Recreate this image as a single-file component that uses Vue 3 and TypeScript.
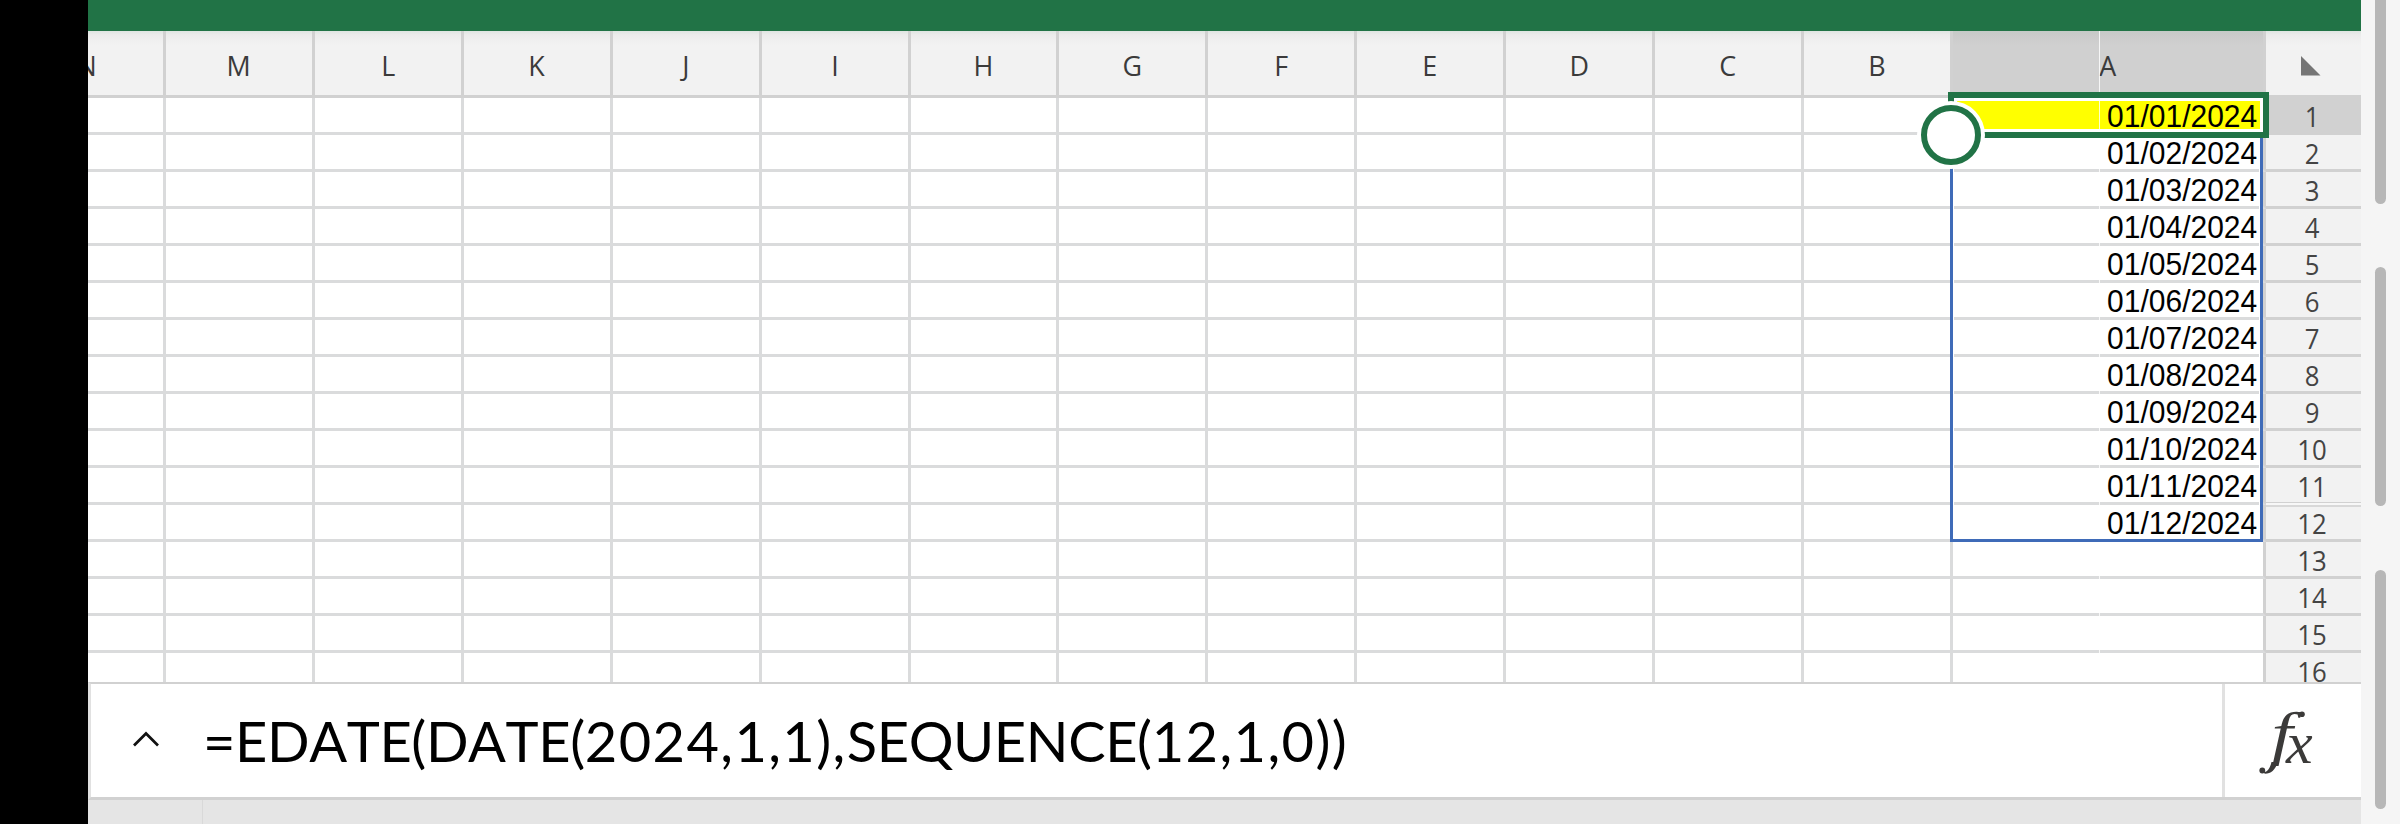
<script setup lang="ts">
const columns: string[] = ['N', 'M', 'L', 'K', 'J', 'I', 'H', 'G', 'F', 'E', 'D', 'C', 'B', 'A']
const rows = Array.from({ length: 16 }, (_, i) => ({
  number: i + 1,
  date: i < 12 ? `01/${String(i + 1).padStart(2, '0')}/2024` : '',
}))
const formula = [
  { text: '=EDATE(DATE(', kind: 'fn' },
  { text: '2024,1,1),', kind: 'args' },
  { text: 'SEQUENCE(', kind: 'fn' },
  { text: '12,1,0))', kind: 'args' },
]
</script>

<template>
  <div class="screen">
    <div class="gutter"></div>
    <main class="app">
      <div class="ribbon"></div>
      <section class="sheet">
        <div class="head">
          <div v-for="c in columns" :key="c" class="col" :class="{ selected: c === 'A' }"><span>{{ c }}</span></div>
          <div class="corner"><svg width="20" height="20" viewBox="0 0 20 20"><path d="M0 0V19.5H19.5Z" fill="#757575" /></svg></div>
        </div>
        <div v-for="r in rows" :key="r.number" class="row" :class="{ current: r.number === 1 }">
          <div v-for="c in columns" :key="c" class="cell" :class="{ first: c === 'A' }">
            <span v-if="c === 'A'">{{ r.date }}</span>
          </div>
          <div class="rownum"><span>{{ r.number }}</span></div>
        </div>
        <div class="seam"></div>
        <div class="spill"></div>
        <div class="selection"></div>
        <div class="handle"></div>
        <div class="hairline"></div>
      </section>
      <section class="bar">
        <svg class="chevron" width="28" height="18" viewBox="0 0 28 18"><path d="M2 15.5L14 3.5L26 15.5" fill="none" stroke="#111" stroke-width="2.7" /></svg>
        <div class="formula"><span v-for="(part, i) in formula" :key="i" :class="part.kind">{{ part.text }}</span></div>
        <div class="fx">
          <svg width="136" height="112" viewBox="0 0 136 112">
            <g fill="#3b3a39" font-family="'Liberation Serif', serif" font-style="italic">
              <text transform="translate(46.5 69) scale(1.27 1)" font-size="60">f</text>
              <text x="61" y="79" font-size="60">x</text>
              <path d="M53 78C50 86 46 89.8 40 89.8L38 88.2C43 88.2 45 84 46.5 78Z" />
              <circle cx="37.3" cy="86.5" r="2.9" />
              <circle cx="77" cy="30.3" r="2.8" />
            </g>
          </svg>
        </div>
      </section>
      <div class="footer"><div class="tick"></div></div>
    </main>
    <aside class="rail">
      <div class="thumb one"></div>
      <div class="thumb two"></div>
      <div class="thumb three"></div>
    </aside>
  </div>
</template>

<style>
body { margin: 0; overflow: hidden; }
</style>

<style scoped>
* { box-sizing: border-box; }
.screen { display: flex; width: 2400px; height: 824px; overflow: hidden; background: #fff; }
.gutter { width: 88px; background: #000; }
.app { width: 2273px; display: flex; flex-direction: column; }
.ribbon { height: 30.5px; background: #217346; flex: none; }
.sheet { position: relative; height: 651.5px; flex: none; overflow: hidden; }
.head { display: grid; grid-template-columns: 78px repeat(12, 148.92px) 313px 95px; height: 67.5px; background: linear-gradient(#dfe5e2 0, #ececec 4px, #f2f2f2 14px); border-bottom: 3px solid #d1d1d1; }
.col { display: flex; align-items: center; justify-content: center; border-right: 3px solid #d1d1d1; font: 28px/40px "Open Sans", sans-serif; color: #3b3b3b; padding-top: 4px; }
.col span { transform: scaleX(.96); }
.col:first-child { justify-content: flex-end; padding-right: 66px; }
.col.selected { background: linear-gradient(#c5cac7 0, #cbcbcb 5px, #d0d0d0 14px); }
.corner { padding: 25px 0 0 35px; line-height: 0; }
.row { display: grid; grid-template-columns: 78px repeat(12, 148.92px) 313px 95px; height: 37px; }
.cell { border-right: 3px solid #dadbdc; border-bottom: 3px solid #dadbdc; }
.first { border-right-color: #d1d1d1; font: 31px/34px "Liberation Sans", sans-serif; font-kerning: none; color: #000; text-align: right; padding-right: 6px; white-space: nowrap; }
.first span { display: inline-block; transform-origin: right; transform: translateY(2px) scaleX(.967); }
.current .first { background: #ff0; }
.rownum { background: #f2f2f2; border-bottom: 3px solid #d1d1d1; text-align: center; font: 28px/34px "Open Sans", sans-serif; color: #444; }
.rownum span { display: inline-block; transform: translate(-1px, 1px) scaleX(.92); }
.current .rownum { background: #d1d1d1; }
.seam { position: absolute; left: 2011px; top: 0; width: 1px; height: 100%; background: #fff; opacity: .8; }
.spill { position: absolute; left: 1862px; top: 104px; width: 313px; height: 407.5px; border: 3px solid #3f6bb8; box-shadow: inset 0 0 0 1px #fff; }
.selection { position: absolute; left: 1859.5px; top: 61.5px; width: 321.5px; height: 46px; border: 6px solid #217346; box-shadow: inset 0 0 0 3px #fff; }
.handle { position: absolute; left: 1829px; top: 70.5px; width: 68px; height: 68px; border-radius: 50%; background: #fff; }
.handle::after { content: ""; position: absolute; inset: 4px; border-radius: 50%; border: 6px solid #217346; }
.hairline { position: absolute; left: 2178px; right: 0; top: 474.5px; height: 2px; background: #d8d8d8; box-shadow: 0 -2px 0 #f7f7f7; }
.bar { display: flex; align-items: center; height: 118px; flex: none; border-top: 2.5px solid #d1d1d1; border-bottom: 3px solid #d1d1d1; border-left: 3px solid #e1e1e1; background: #fff; }
.chevron { margin: 0 0 3px 41px; flex: none; }
.formula { flex: 1; padding-left: 43px; font: 56px/80px Lato, sans-serif; font-kerning: none; color: #000; white-space: nowrap; }
.fn { letter-spacing: -.4px; }
.args { letter-spacing: 1.4px; }
.fx { width: 139px; height: 100%; border-left: 3px solid #e1e1e1; }
.fx svg { display: block; }
.footer { flex: 1; background: #e5e5e5; }
.tick { margin-left: 114px; width: 1px; height: 100%; background: #d9d9d9; }
.rail { width: 39px; background: #f5f5f5; padding-left: 14px; }
.thumb { width: 11px; background: #b7b7b7; border-radius: 6px; }
.one { height: 204px; border-radius: 0 0 6px 6px; }
.two { height: 239px; margin-top: 63px; }
.three { height: 239px; margin-top: 64px; }
</style>
